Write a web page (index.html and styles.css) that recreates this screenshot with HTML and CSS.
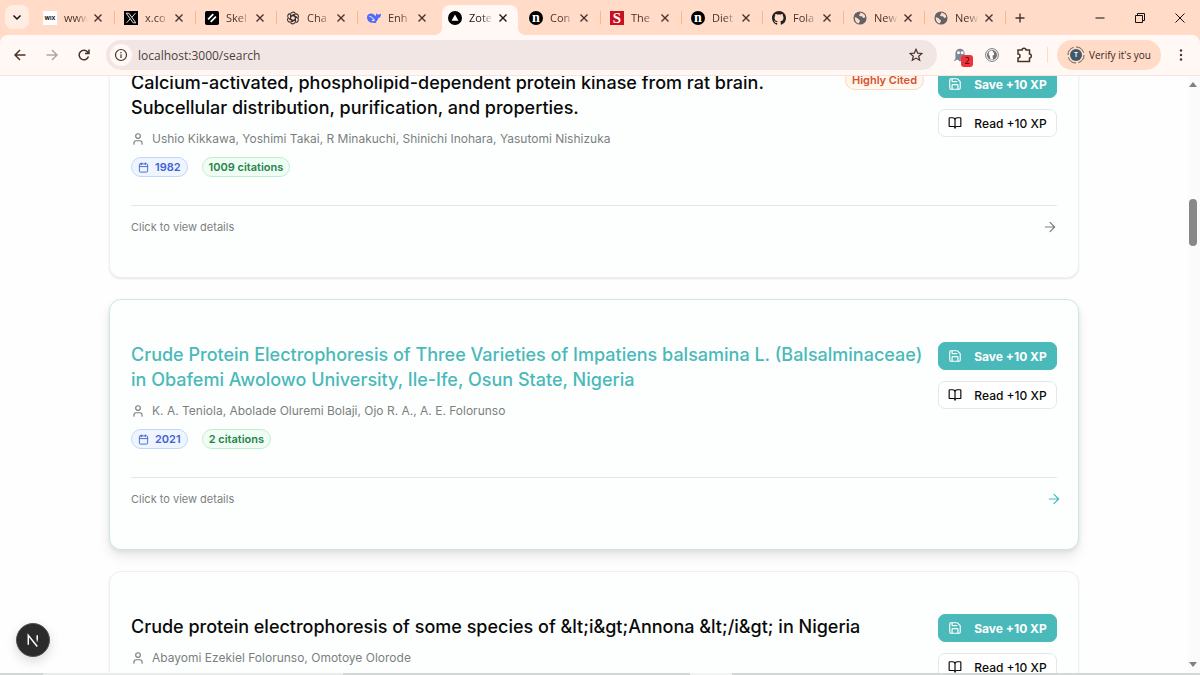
FILE: index.html
```html
<!DOCTYPE html>
<html lang="en">
<head>
  <meta charset="UTF-8" />
  <title>Search</title>
  <meta name="viewport" content="width=device-width, initial-scale=1.0" />
  <link rel="stylesheet" href="styles.css">
</head>
<body>
  <!-- shared icons -->
  <svg class="sprite" aria-hidden="true">
    <symbol id="close" viewBox="0 0 10 10"><path d="M1.5 1.5l7 7M8.5 1.5l-7 7" /></symbol>
    <symbol id="user" viewBox="0 0 24 24"><path d="M19 21v-2a4 4 0 0 0-4-4H9a4 4 0 0 0-4 4v2" /><circle cx="12" cy="7" r="4" /></symbol>
    <symbol id="calendar" viewBox="0 0 24 24"><path d="M8 2v4M16 2v4M3 10h18" /><rect x="3" y="4" width="18" height="18" rx="2" /></symbol>
    <symbol id="save" viewBox="0 0 24 24"><path d="M15.2 3a2 2 0 0 1 1.4.6l3.8 3.8a2 2 0 0 1 .6 1.4V19a2 2 0 0 1-2 2H5a2 2 0 0 1-2-2V5a2 2 0 0 1 2-2z" /><path d="M17 21v-7a1 1 0 0 0-1-1H8a1 1 0 0 0-1 1v7M7 3v4a1 1 0 0 0 1 1h7" /></symbol>
    <symbol id="book" viewBox="0 0 24 24"><path d="M12 7v14M3 18a1 1 0 0 1-1-1V4a1 1 0 0 1 1-1h5a4 4 0 0 1 4 4 4 4 0 0 1 4-4h5a1 1 0 0 1 1 1v13a1 1 0 0 1-1 1h-6a3 3 0 0 0-3 3 3 3 0 0 0-3-3z" /></symbol>
    <symbol id="arrow" viewBox="0 0 24 24"><path d="M4 12h16M12 4l8 8-8 8" /></symbol>
    <symbol id="globe" viewBox="0 0 16 16"><circle cx="8" cy="8" r="7.5" fill="#5f6368" /><path d="M2 7c2 0 3 1 4 2s2 1 2 2-1 1-1 3c-3 0-5-3-5-7zM8 2c1 1-1 2-1 3s2 1 3 1 1 2 2 2 1-1 2-1c0-3-3-5-6-5z" fill="#ffdbc8" /></symbol>
  </svg>

  <header class="browser">
    <div class="tab-strip">
      <button class="tab-search" aria-label="Search tabs"><svg viewBox="0 0 10 10"><path d="M1.5 3.5L5 7l3.500-3.500" /></svg></button>
      <div class="tabs">
        <div class="tab">
          <svg class="favicon" viewBox="0 0 16 16"><rect width="16" height="16" fill="#fff" /><text x="8" y="10" text-anchor="middle" class="logo-wix">WIX</text></svg>
          <span class="tab-name">www</span>
          <button class="tab-close" aria-label="Close tab"><svg><use href="#close" /></svg></button>
        </div>
        <div class="tab">
          <svg class="favicon" viewBox="0 0 16 16"><rect width="16" height="16" fill="#000" /><path d="M2.500 2.500h3L13.500 13.500h-3zM13 2.500L9 7.200M7 9l-4 4.500" fill="none" stroke="#fff" /></svg>
          <span class="tab-name">x.co</span>
          <button class="tab-close" aria-label="Close tab"><svg><use href="#close" /></svg></button>
        </div>
        <div class="tab">
          <svg class="favicon" viewBox="0 0 16 16"><rect width="16" height="16" rx="2" fill="#000" /><path d="M3.500 9.500l6-6M6.500 12.500l6-6" stroke="#fff" stroke-width="2" /></svg>
          <span class="tab-name">Skel</span>
          <button class="tab-close" aria-label="Close tab"><svg><use href="#close" /></svg></button>
        </div>
        <div class="tab">
          <svg class="favicon" viewBox="0 0 16 16" fill="none" stroke="#3b3331" stroke-width="1.200"><g id="petal"><path d="M5.200 9.600V4.200a3 3 0 0 1 5.600-1.400M5.200 6.400L8 4.800l4.300 2.500" /></g><use href="#petal" transform="rotate(60 8 8)" /><use href="#petal" transform="rotate(120 8 8)" /><use href="#petal" transform="rotate(180 8 8)" /><use href="#petal" transform="rotate(240 8 8)" /><use href="#petal" transform="rotate(300 8 8)" /></svg>
          <span class="tab-name">Cha</span>
          <button class="tab-close" aria-label="Close tab"><svg><use href="#close" /></svg></button>
        </div>
        <div class="tab before-active">
          <svg class="favicon" viewBox="0 0 16 16"><path d="M0 7c0-3 3-4.500 6-4 2 .3 3 2 4 3 .5-1 .2-2.500.8-3.500.6 1 1.200 1.500 2.200 1.500s2-.5 3-1c0 3-1 4.500-3 5-.5 2-1.500 3.500-3 4.500.8.5 1 1 .5 1.300-1.500.2-2.500-.3-3.500-.3C3 13.500 0 11 0 7z" fill="#4d6bfe" /><path d="M2.500 6c2.500 0 4 2 6 4.500-1 .8-2 .6-3 .1" fill="none" stroke="#ffdbc8" stroke-width="1.200" /></svg>
          <span class="tab-name">Enh</span>
          <button class="tab-close" aria-label="Close tab"><svg><use href="#close" /></svg></button>
        </div>
        <div class="tab active">
          <svg class="favicon" viewBox="0 0 16 16"><circle cx="8" cy="8" r="8" fill="#000" /><path d="M8 4l4 7H4z" fill="#fff" /></svg>
          <span class="tab-name">Zote</span>
          <button class="tab-close" aria-label="Close tab"><svg><use href="#close" /></svg></button>
        </div>
        <div class="tab">
          <svg class="favicon" viewBox="0 0 16 16"><circle cx="8" cy="8" r="8" fill="#000" /><text x="8" y="12" text-anchor="middle" class="logo-n">n</text></svg>
          <span class="tab-name">Con</span>
          <button class="tab-close" aria-label="Close tab"><svg><use href="#close" /></svg></button>
        </div>
        <div class="tab">
          <svg class="favicon" viewBox="0 0 16 16"><rect width="16" height="16" fill="#c9101f" /><text x="8" y="14" text-anchor="middle" class="logo-s">S</text></svg>
          <span class="tab-name">The</span>
          <button class="tab-close" aria-label="Close tab"><svg><use href="#close" /></svg></button>
        </div>
        <div class="tab">
          <svg class="favicon" viewBox="0 0 16 16"><circle cx="8" cy="8" r="8" fill="#000" /><text x="8" y="12" text-anchor="middle" class="logo-n">n</text></svg>
          <span class="tab-name">Diet</span>
          <button class="tab-close" aria-label="Close tab"><svg><use href="#close" /></svg></button>
        </div>
        <div class="tab">
          <svg class="favicon" viewBox="0 0 16 16"><path d="M8 0C3.580 0 0 3.580 0 8c0 3.540 2.290 6.530 5.470 7.590.4.070.55-.17.55-.38 0-.19-.01-.82-.01-1.490-2.010.37-2.530-.49-2.690-.94-.09-.23-.48-.94-.82-1.130-.28-.15-.68-.52-.01-.53.63-.01 1.080.58 1.230.82.72 1.210 1.870.87 2.330.66.07-.52.28-.87.51-1.070-1.780-.2-3.640-.89-3.640-3.950 0-.87.31-1.590.82-2.150-.08-.2-.36-1.020.08-2.120 0 0 .67-.21 2.200.82.64-.18 1.320-.27 2-.27s1.360.09 2 .27c1.530-1.040 2.200-.82 2.200-.82.44 1.100.16 1.920.08 2.120.51.56.82 1.270.82 2.150 0 3.070-1.870 3.750-3.650 3.950.29.25.54.73.54 1.480 0 1.070-.01 1.930-.01 2.200 0 .21.15.46.55.38A8.010 8.010 0 0 0 16 8c0-4.420-3.580-8-8-8z" fill="#24201f" /></svg>
          <span class="tab-name">Fola</span>
          <button class="tab-close" aria-label="Close tab"><svg><use href="#close" /></svg></button>
        </div>
        <div class="tab">
          <svg class="favicon"><use href="#globe" /></svg>
          <span class="tab-name">New</span>
          <button class="tab-close" aria-label="Close tab"><svg><use href="#close" /></svg></button>
        </div>
        <div class="tab">
          <svg class="favicon"><use href="#globe" /></svg>
          <span class="tab-name">New</span>
          <button class="tab-close" aria-label="Close tab"><svg><use href="#close" /></svg></button>
        </div>
        <button class="new-tab" aria-label="New tab"><svg viewBox="0 0 10 10"><path d="M5 .5v9M.5 5h9" /></svg></button>
      </div>
      <div class="window-controls">
        <button aria-label="Minimize"><svg viewBox="0 0 10 10"><path d="M.5 5h9" /></svg></button>
        <button aria-label="Restore"><svg viewBox="0 0 10 10"><path d="M.5 2.500h7v7h-7zM2.500 2.500v-2h7v7h-2" /></svg></button>
        <button aria-label="Close"><svg viewBox="0 0 10 10"><path d="M.5.5l9 9M9.500.5l-9 9" /></svg></button>
      </div>
    </div>

    <div class="toolbar">
      <button class="tool" aria-label="Back"><svg viewBox="0 0 12 12"><path d="M11.500 6H1M6 1L1 6l5 5" /></svg></button>
      <button class="tool" aria-label="Forward" disabled><svg viewBox="0 0 12 12"><path d="M.5 6H11M6 1l5 5-5 5" /></svg></button>
      <button class="tool" aria-label="Reload"><svg viewBox="0 0 12 12"><path d="M10.500 7.500a4.800 4.800 0 1 1-.6-4.300L11 4.500M11 .5v4H7" /></svg></button>
      <div class="address">
        <button class="site-info" aria-label="Site information"><svg viewBox="0 0 14 14"><circle cx="7" cy="7" r="5.500" /><path d="M7 6.300v3.700M7 4v1.200" /></svg></button>
        <input type="text" value="localhost:3000/search" aria-label="Address" />
        <button class="star" aria-label="Bookmark"><svg viewBox="0 0 14 14"><path d="M7 1.300l1.700 3.800 4.200.4-3.200 2.700 1 4.100L7 10.100l-3.700 2.200 1-4.100L1.100 5.500l4.200-.4z" /></svg></button>
      </div>
      <div class="extensions">
        <button class="tool" aria-label="Ghostery">
          <svg class="ghost" viewBox="0 0 14 14"><path d="M1.500 12.500L3 10V5.500a4 4 0 0 1 8 0V12l-2-1-2 2-2-2z" fill="#7d8795" stroke="none" /><circle cx="5.700" cy="5" r="1.300" fill="#fff" stroke="none" /><circle cx="8.900" cy="5" r="1.300" fill="#fff" stroke="none" /></svg>
          <span class="count">2</span>
        </button>
        <button class="tool" aria-label="Extension"><svg class="round" viewBox="0 0 14 14"><circle cx="7" cy="7" r="6.400" stroke="#777b80" stroke-width="1" /><circle cx="7" cy="7" r="5" fill="#6c7278" stroke="none" /><path d="M6 2.500c-2.500 1-3 3.500-1.300 5.500l.8 3.500h2.500l-.5-4c1.500 0 2-1 1.500-2-.3-1.500-1.300-2.800-3-3z" fill="#fff" stroke="none" /></svg></button>
        <button class="tool" aria-label="Extensions"><svg class="puzzle" viewBox="0 0 16 16"><path d="M2 3h4a2 1.800 0 0 1 4 0h3.500v4a1.800 2 0 0 1 0 4v3.500H2V11a2 2 0 0 0 0-4z" /></svg></button>
      </div>
      <button class="profile">
        <svg viewBox="0 0 18 18"><circle cx="9" cy="9" r="8" fill="none" stroke="#6b5a52" stroke-dasharray="10 2.500" /><circle cx="9" cy="9" r="6" fill="#3f596b" /><text x="9" y="11" text-anchor="middle" class="avatar">T</text></svg>
        Verify it's you
      </button>
      <button class="tool menu" aria-label="Menu"><svg viewBox="0 0 12 12"><circle cx="6" cy="1.500" r="1.200" /><circle cx="6" cy="6" r="1.200" /><circle cx="6" cy="10.500" r="1.200" /></svg></button>
    </div>
  </header>

  <div class="viewport">
    <main class="page">
      <div class="results">
        <article class="card">
          <div class="card-top">
            <div class="card-info">
              <h2>Calcium-activated, phospholipid-dependent protein kinase from rat brain. Subcellular distribution, purification, and properties.</h2>
              <p class="authors"><svg class="icon"><use href="#user" /></svg>Ushio Kikkawa, Yoshimi Takai, R Minakuchi, Shinichi Inohara, Yasutomi Nishizuka</p>
              <div class="badges">
                <span class="badge year"><svg class="icon"><use href="#calendar" /></svg>1982</span>
                <span class="badge citations">1009 citations</span>
              </div>
            </div>
            <span class="badge cited">Highly Cited</span>
            <div class="card-actions">
              <button class="btn save"><svg class="icon"><use href="#save" /></svg>Save +10 XP</button>
              <button class="btn read"><svg class="icon"><use href="#book" /></svg>Read +10 XP</button>
            </div>
          </div>
          <div class="card-footer">
            <span>Click to view details</span>
            <svg class="icon"><use href="#arrow" /></svg>
          </div>
        </article>

        <article class="card hovered">
          <div class="card-top">
            <div class="card-info">
              <h2>Crude Protein Electrophoresis of Three Varieties of Impatiens balsamina L. (Balsalminaceae) in Obafemi Awolowo University, Ile-Ife, Osun State, Nigeria</h2>
              <p class="authors"><svg class="icon"><use href="#user" /></svg>K. A. Teniola, Abolade Oluremi Bolaji, Ojo R. A., A. E. Folorunso</p>
              <div class="badges">
                <span class="badge year"><svg class="icon"><use href="#calendar" /></svg>2021</span>
                <span class="badge citations">2 citations</span>
              </div>
            </div>
            <div class="card-actions">
              <button class="btn save"><svg class="icon"><use href="#save" /></svg>Save +10 XP</button>
              <button class="btn read"><svg class="icon"><use href="#book" /></svg>Read +10 XP</button>
            </div>
          </div>
          <div class="card-footer">
            <span>Click to view details</span>
            <svg class="icon"><use href="#arrow" /></svg>
          </div>
        </article>

        <article class="card">
          <div class="card-top">
            <div class="card-info">
              <h2>Crude protein electrophoresis of some species of &amp;lt;i&amp;gt;Annona &amp;lt;/i&amp;gt; in Nigeria</h2>
              <p class="authors"><svg class="icon"><use href="#user" /></svg>Abayomi Ezekiel Folorunso, Omotoye Olorode</p>
            </div>
            <div class="card-actions">
              <button class="btn save"><svg class="icon"><use href="#save" /></svg>Save +10 XP</button>
              <button class="btn read"><svg class="icon"><use href="#book" /></svg>Read +10 XP</button>
            </div>
          </div>
        </article>
      </div>
      <button class="dev-badge" aria-label="Dev tools"><svg viewBox="0 0 34 34"><defs><linearGradient id="fade" x1="0" y1="0" x2="0" y2="1"><stop offset="0.500" stop-color="#fff" /><stop offset="1" stop-color="#fff" stop-opacity="0" /></linearGradient></defs><path d="M12 22V12l9.500 12" fill="none" stroke="#fff" stroke-width="1.600" /><path d="M20.700 12h1.600v8h-1.600z" fill="url(#fade)" /></svg></button>
    </main>
    <div class="scrollbar">
      <span class="scroll-up"></span>
      <span class="thumb"></span>
      <span class="scroll-down"></span>
    </div>
  </div>
  <div class="taskbar-edge"></div>
</body>
</html>
```
FILE: styles.css
```css
* {
  box-sizing: border-box;
}

body {
  margin: 0;
  height: 100vh;
  display: flex;
  flex-direction: column;
  overflow: hidden;
  font-family: Inter, sans-serif;
  background: #fefefe;
  color: #0a0a0a;
}

button {
  padding: 0;
  border: none;
  background: none;
  font-family: inherit;
  color: inherit;
  cursor: pointer;
}

svg {
  display: block;
  flex-shrink: 0;
}

.sprite {
  position: absolute;
  width: 0;
  height: 0;
}

/* browser frame */
.browser {
  flex-shrink: 0;
  background: #ffdbc8;
  color: #4a322b;
  font-family: "Open Sans", sans-serif;
}

.browser button {
  display: flex;
  align-items: center;
  justify-content: center;
}

.browser button svg {
  width: 10px;
  height: 10px;
  fill: none;
  stroke: currentColor;
}

.tab-strip {
  display: flex;
  height: 35px;
}

.tab-search {
  width: 24px;
  height: 24px;
  margin: 5px;
  border-radius: 8px;
  background: #ffede4;
  color: #111;
}

.browser .tab-search svg {
  stroke-width: 1.5;
}

.tabs {
  display: flex;
  flex: 1;
  align-items: center;
}

.tab {
  position: relative;
  display: flex;
  align-items: center;
  width: 81px;
  height: 35px;
  padding-left: 9px;
  font-size: 11px;
}

.tab::after {
  content: "";
  position: absolute;
  right: 0;
  top: 11px;
  width: 1px;
  height: 13px;
  background: #ffb587;
}

.tab.before-active::after {
  display: none;
}

.favicon {
  width: 14px;
  height: 14px;
  z-index: 1;
}

.tab-name {
  width: 24px;
  margin-left: 7px;
  white-space: nowrap;
  -webkit-mask-image: linear-gradient(to right, #000 50%, transparent);
  mask-image: linear-gradient(to right, #000 50%, transparent);
  z-index: 1;
}

.tab-close {
  width: 16px;
  height: 16px;
  margin-left: 2px;
  z-index: 1;
}

.browser .tab-close svg,
.browser .new-tab svg {
  stroke-width: 1.4;
}

.tab.active {
  color: #1f1512;
}

.tab.active::before {
  content: "";
  position: absolute;
  left: 3px;
  right: 2px;
  top: 5px;
  bottom: 0;
  border-radius: 8px 8px 0 0;
  background: #fff8f5;
}

/* rounded feet either side of the open tab */
.tab.active::after {
  top: auto;
  bottom: 0;
  left: -5px;
  right: -6px;
  width: auto;
  height: 8px;
  background:
    radial-gradient(circle at 0 0, transparent 8px, #fff8f5 8px) left / 8px 8px no-repeat,
    radial-gradient(circle at 100% 0, transparent 8px, #fff8f5 8px) right / 8px 8px no-repeat;
}

.new-tab {
  width: 28px;
  height: 28px;
}

.window-controls {
  display: flex;
  color: #111;
}

.window-controls button {
  width: 40px;
}

.toolbar {
  display: flex;
  align-items: center;
  height: 41px;
  padding: 0 3px 0 4px;
  border-radius: 8px 8px 0 0;
  border-bottom: 1px solid #fbe3dc;
  background: #fff8f5;
}

.tool {
  position: relative;
  width: 32px;
  height: 30px;
}

.browser .tool svg {
  width: 12px;
  height: 12px;
  stroke-width: 1.5;
}

.tool:disabled {
  color: #b3a5a0;
}

.address {
  display: flex;
  flex: 1;
  align-items: center;
  height: 30px;
  margin-left: 6px;
  padding: 0 4px;
  border-radius: 15px;
  background: #f2e6e5;
}

.site-info {
  width: 22px;
  height: 22px;
  border-radius: 50%;
  background: #fff8f5;
}

.browser .site-info svg,
.browser .star svg {
  width: 14px;
  height: 14px;
  stroke-width: 1.2;
}

.address input {
  flex: 1;
  min-width: 0;
  padding: 0 6px;
  border: none;
  outline: none;
  background: none;
  font-family: inherit;
  font-size: 12px;
  color: #4a3f3c;
}

.star {
  width: 34px;
  height: 30px;
}

.extensions {
  display: flex;
  align-items: center;
  margin-left: 7px;
  padding-right: 7px;
  border-right: 1px solid transparent;
  border-image: linear-gradient(transparent 25%, #ffdbc8 25% 75%, transparent 75%) 1;
}

.count {
  position: absolute;
  right: 3px;
  bottom: 3px;
  width: 12px;
  height: 12px;
  border-radius: 3px;
  background: #f0323c;
  font-size: 9px;
  line-height: 12px;
  color: #300;
}

.browser .tool .round {
  width: 14px;
  height: 14px;
}

.browser .tool .ghost,
.browser .tool .puzzle {
  width: 16px;
  height: 16px;
}

.browser .profile {
  gap: 4px;
  width: 104px;
  height: 30px;
  margin-left: 9px;
  border-radius: 15px;
  background: #ffdbc8;
  font-size: 10px;
  color: #3a2722;
  white-space: nowrap;
}

.browser .profile svg {
  width: 18px;
  height: 18px;
  stroke: none;
}

.browser .menu {
  margin-left: 4px;
}

.browser .menu svg {
  fill: currentColor;
  stroke: none;
}

.logo-wix {
  font: bold 6px Inter, sans-serif;
}

.logo-n {
  font: bold 16px "Liberation Serif", serif;
  fill: #fff;
}

.logo-s {
  font: bold 17px "Liberation Serif", serif;
  fill: #fff;
}

.avatar {
  font: bold 6px Inter, sans-serif;
  fill: #fff;
}

/* page */
.viewport {
  display: flex;
  flex: 1;
  min-height: 0;
}

.page {
  position: relative;
  flex: 1;
  overflow: hidden;
}

/* list is scrolled part way past the first result */
.results {
  display: flex;
  flex-direction: column;
  gap: 21px;
  max-width: 1010px;
  margin: -49px auto 0;
  padding: 0 20px;
}

.card {
  padding: 42px 21px;
  border: 1px solid #edf1f1;
  border-radius: 12px;
  background: #fdfffe;
  box-shadow: 0 1px 2px rgba(0, 0, 0, 0.1);
}

.card.hovered {
  border-color: #c9e9e8;
  box-shadow: 0 7px 12px rgba(0, 0, 0, 0.08), 0 2px 4px rgba(0, 0, 0, 0.08);
}

.card-top {
  display: flex;
  align-items: flex-start;
  gap: 14px;
}

.card-info {
  flex: 1;
}

.icon {
  fill: none;
  stroke: currentColor;
  stroke-width: 2;
  stroke-linecap: round;
  stroke-linejoin: round;
  width: 14px;
  height: 14px;
}

h2 {
  margin: 0;
  font-size: 18px;
  font-weight: 500;
  line-height: 25px;
}

.hovered h2 {
  color: #4ab9b9;
}

.authors {
  display: flex;
  align-items: center;
  gap: 7px;
  margin: 10px 0 9px;
  font-size: 12px;
  line-height: 18px;
  color: #7b7f7f;
}

.badges {
  display: flex;
  gap: 14px;
}

.badge {
  display: flex;
  align-items: center;
  gap: 6px;
  height: 20px;
  padding: 0 6px;
  border: 1px solid;
  border-radius: 10px;
  font-size: 11px;
  font-weight: 600;
  white-space: nowrap;
}

.badge .icon {
  width: 11px;
  height: 11px;
}

.year {
  border-color: #c3d7fb;
  background: #eff5ff;
  color: #4061d8;
}

.citations {
  border-color: #bdf0cf;
  background: #f0fdf4;
  color: #26834a;
}

.cited {
  border-color: #fcd9b8;
  background: #fff6ee;
  color: #d5522d;
}

.card-actions {
  display: flex;
  flex-direction: column;
  gap: 11px;
}

.btn {
  display: flex;
  align-items: center;
  justify-content: center;
  gap: 12px;
  width: 119px;
  height: 28px;
  border: 1px solid #e3e8e8;
  border-radius: 7px;
  background: #fff;
  font-size: 12px;
  font-weight: 500;
}

.save {
  border-color: #4ab9b9;
  background: #4ab9b9;
  color: #fff;
  font-weight: 700;
}

.card-footer {
  display: flex;
  align-items: center;
  justify-content: space-between;
  margin-top: 28px;
  padding-top: 13px;
  border-top: 1px solid #e3e8e8;
  font-size: 11px;
  line-height: 16px;
  color: #7b7f7f;
}

.hovered .card-footer .icon {
  color: #4ab9b9;
  transform: translateX(4px);
}

.dev-badge {
  position: absolute;
  left: 16px;
  bottom: 16px;
  width: 34px;
  height: 34px;
  border: 1px solid #555;
  border-radius: 50%;
  background: #2b2b2b;
  box-shadow: 0 4px 12px rgba(0, 0, 0, 0.15);
}

.scrollbar {
  display: flex;
  flex-direction: column;
  align-items: center;
  width: 12px;
  padding: 6px 2px 6px 0;
  background: #fbfbfb;
}

.scroll-up,
.scroll-down {
  border: 4px solid transparent;
  border-top-width: 0;
  border-bottom: 5px solid #808080;
}

.scroll-down {
  margin-top: auto;
  border-top: 5px solid #808080;
  border-bottom-width: 0;
}

.thumb {
  width: 8px;
  height: 47px;
  margin-top: 112px;
  border-radius: 4px;
  background: #888;
}

.taskbar-edge {
  flex-shrink: 0;
  height: 2px;
  background: linear-gradient(to right, #d3d8d6 43px, #e9eceb 43px 343px, #d3d8d6 343px 690px, #f1f3f2 690px 732px, #d3d8d6 732px);
}
```
